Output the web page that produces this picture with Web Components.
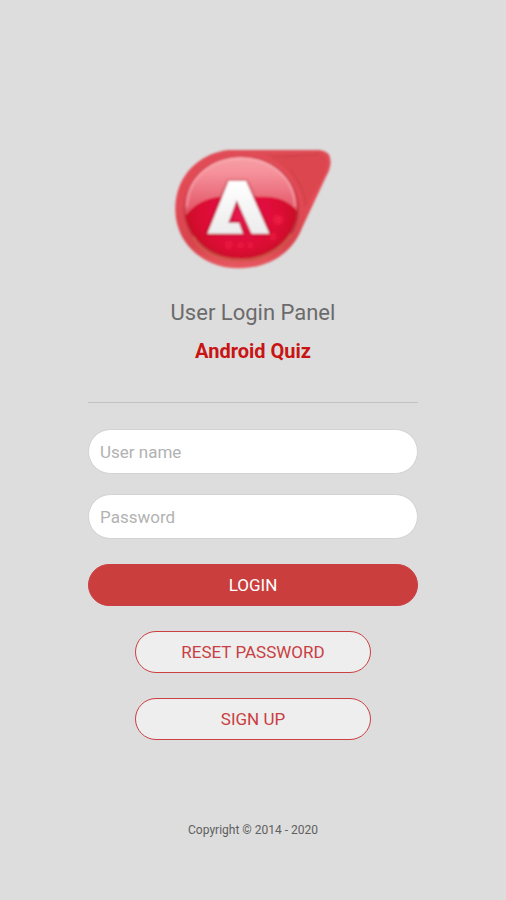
<!DOCTYPE html>
<html lang="en">
<head>
<meta charset="utf-8">
<meta name="viewport" content="width=device-width, initial-scale=1">
<title>Android Quiz - User Login Panel</title>
<style>
html { background: #ddd; }
body { margin: 0; font-family: Roboto, "Liberation Sans", sans-serif; }
</style>
</head>
<body>
<login-page>
  <quiz-logo slot="logo"></quiz-logo>
  <span slot="heading">User Login Panel</span>
  <span slot="app">Android Quiz</span>
  <text-field label="User name" name="username"></text-field>
  <text-field label="Password" name="password" type="password"></text-field>
  <pill-button primary>LOGIN</pill-button>
  <pill-button>RESET PASSWORD</pill-button>
  <pill-button>SIGN UP</pill-button>
  <span slot="footer">Copyright © 2014 - 2020</span>
</login-page>
<script>
class Base extends HTMLElement {
  constructor() {
    super();
    this.attachShadow({ mode: 'open' }).innerHTML = this.constructor.markup;
  }
}

class LoginPage extends Base {
  static markup = `
    <style>
      :host { display: block; box-sizing: border-box; padding: 140px 24px 60px; }
      main { max-width: 330px; margin: 0 auto; text-align: center; }
      h1 { margin: 19px 0 12px; font-size: 22px; line-height: 28px; font-weight: 400; color: #6b6b6b; }
      h2 { margin: 0; font-size: 20px; line-height: 24px; font-weight: 700; color: #c91414; }
      hr { margin: 39px 0 26px; border: 0; border-top: 1px solid #c2c2c2; }
      form { display: flex; flex-direction: column; gap: 20px; }
      footer { margin-top: 80px; font-size: 12px; line-height: 20px; color: #606060; }
    </style>
    <main>
      <slot name="logo"></slot>
      <h1><slot name="heading"></slot></h1>
      <h2><slot name="app"></slot></h2>
      <hr>
      <form><slot></slot></form>
      <footer><slot name="footer"></slot></footer>
    </main>`;
}

class TextField extends Base {
  static markup = `
    <style>
      :host { display: block; }
      input {
        display: block; box-sizing: border-box; width: 100%; height: 45px; margin: 0; padding: 0 11px;
        border: 1px solid #d2d2d2; border-radius: 23px; background: #fff;
        font: 400 17px Roboto, "Liberation Sans", sans-serif; color: #444;
      }
      input::placeholder { color: #b2b2b2; opacity: 1; }
    </style>
    <input>`;
  connectedCallback() {
    const input = this.shadowRoot.querySelector('input');
    input.type = this.getAttribute('type') || 'text';
    input.name = this.getAttribute('name');
    input.placeholder = this.getAttribute('label');
    input.setAttribute('aria-label', this.getAttribute('label'));
  }
}

class PillButton extends Base {
  static markup = `
    <style>
      :host { display: block; align-self: center; width: 236px; max-width: 100%; margin-top: 5px; }
      :host([primary]) { width: 100%; }
      button {
        display: block; box-sizing: border-box; width: 100%; height: 42px; margin: 0; padding: 0 16px;
        border: 1px solid #ca4042; border-radius: 21px; background: #eee;
        font: 400 17px Roboto, "Liberation Sans", sans-serif; color: #c93e42; cursor: pointer;
      }
      :host([primary]) button { background: #ca3f3e; color: #fff; }
    </style>
    <button type="button"><slot></slot></button>`;
}

class QuizLogo extends Base {
  static markup = `
    <style>
      :host { display: block; }
      svg { display: block; width: 180px; height: 140px; margin: 0 auto; }
    </style>
    <svg viewBox="-6 0 540 420" role="img" aria-label="Android Quiz logo">
      <defs>
        <linearGradient id="body" x1="0" y1="0" x2="0" y2="1">
          <stop offset="0" stop-color="#e04d57"/><stop offset=".4" stop-color="#e34a55"/>
          <stop offset=".8" stop-color="#d8444d"/><stop offset="1" stop-color="#e85a62"/>
        </linearGradient>
        <radialGradient id="ball" cx=".5" cy=".55" r=".55">
          <stop offset="0" stop-color="#ea1a50"/><stop offset=".65" stop-color="#dc0a34"/>
          <stop offset="1" stop-color="#c20a22"/>
        </radialGradient>
        <linearGradient id="gloss" x1="0" y1="0" x2="0" y2="1">
          <stop offset="0" stop-color="#f8a2a9"/><stop offset=".3" stop-color="#f5919a"/>
          <stop offset="1" stop-color="#e04a5e"/>
        </linearGradient>
        <linearGradient id="letter" x1="0" y1="0" x2="0" y2="1">
          <stop offset="0" stop-color="#fff"/><stop offset="1" stop-color="#ececec"/>
        </linearGradient>
        <linearGradient id="rim" x1="0" y1="0" x2="0" y2="1">
          <stop offset="0" stop-color="#cf4450"/><stop offset=".6" stop-color="#b92c37"/>
          <stop offset="1" stop-color="#bd353c"/>
        </linearGradient>
        <clipPath id="disc"><ellipse cx="228" cy="203" rx="168" ry="152"/></clipPath>
        <filter id="soft"><feGaussianBlur stdDeviation="4"/></filter>
        <filter id="glow" x="-20%" y="-50%" width="140%" height="200%"><feGaussianBlur stdDeviation="7"/></filter>
        <filter id="edge" x="-10%" y="-10%" width="120%" height="120%"><feGaussianBlur stdDeviation="3"/></filter>
      </defs>
      <g filter="url(#edge)">
        <path d="M190 30H464Q502 34 496 76Q494 92 484 108L412 262C384 338 312 385 222 385C112 385 31 308 31 207C31 108 102 40 190 30Z" fill="url(#body)"/>
        <path d="M310 50C350 38 410 42 466 38Q486 44 486 70Q482 100 470 118L418 206C408 140 374 82 310 50Z" fill="#dc4650"/>
        <path d="M300 44C350 54 400 46 462 42M424 196Q414 130 374 88" fill="none" stroke="#c73b46" stroke-width="4" opacity=".5"/>
        <ellipse cx="229" cy="206" rx="173" ry="158" fill="url(#rim)"/>
        <path d="M84 290C118 350 185 360 231 360C292 360 348 332 379 282" fill="none" stroke="#d8604f" stroke-width="6" opacity=".8"/>
        <ellipse cx="228" cy="203" rx="168" ry="152" fill="url(#ball)"/>
        <g clip-path="url(#disc)">
          <path d="M50 40H410V234Q374 168 294 170H170Q98 174 58 232Z" fill="url(#gloss)"/>
          <path d="M66 200C70 110 140 56 228 56S386 110 390 200" fill="none" stroke="#ffc0c4" stroke-width="7" opacity=".4"/>
          <g fill="#f52a48" opacity=".7" filter="url(#glow)">
            <circle cx="191" cy="316" r="11"/><circle cx="226" cy="317" r="9"/><circle cx="256" cy="317" r="9"/>
            <circle cx="340" cy="240" r="15"/><circle cx="324" cy="290" r="11"/>
          </g>
        </g>
        <path d="M191 125H243L313 281H263L215 181L190 248H222L234 281H127Z" fill="#801c32" stroke="#801c32" stroke-width="7" opacity=".5" filter="url(#soft)"/>
        <path d="M191 123H243L313 281H260L215 181L190 248H222L234 281H127Z" fill="url(#letter)"/>
      </g>
    </svg>`;
}

customElements.define('quiz-logo', QuizLogo);
customElements.define('text-field', TextField);
customElements.define('pill-button', PillButton);
customElements.define('login-page', LoginPage);
</script>
</body>
</html>
